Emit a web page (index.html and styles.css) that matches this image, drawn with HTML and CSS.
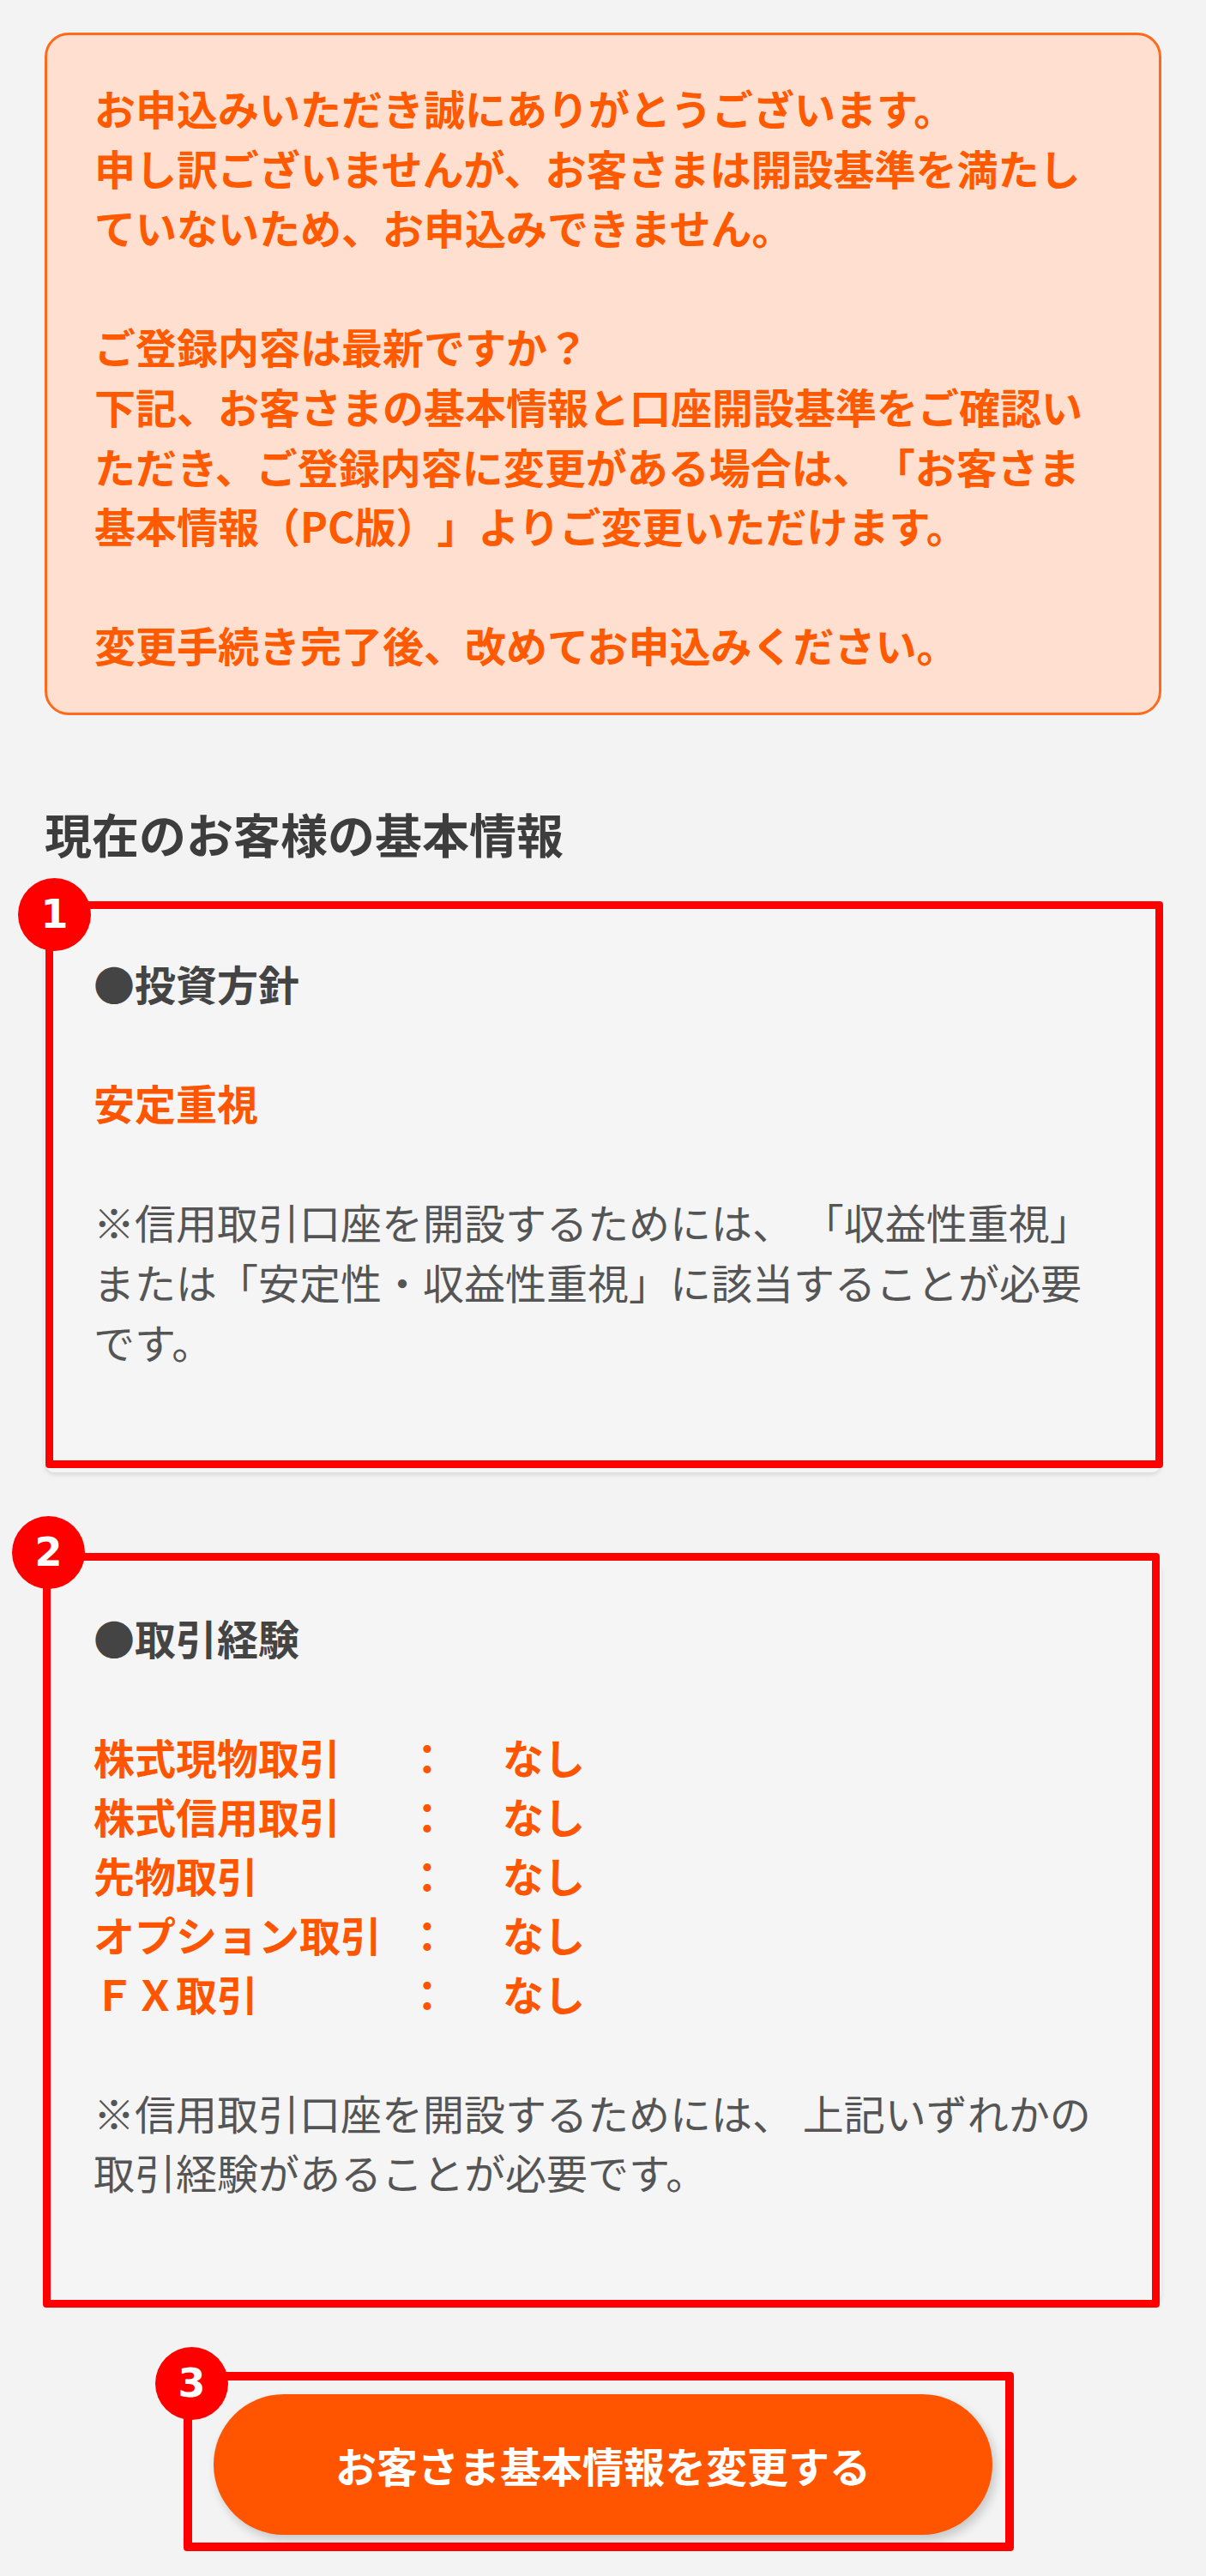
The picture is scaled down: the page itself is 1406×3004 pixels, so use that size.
FILE: index.html
```html
<!DOCTYPE html>
<html lang="ja">
<head>
<meta charset="utf-8">
<title>口座開設基準のご案内</title>
<link rel="stylesheet" href="styles.css">
</head>
<body>
<main class="page">
  <section class="notice">
    <p>お申込みいただき誠にありがとうございます。<br>申し訳ございませんが、お客さまは開設基準を満たし<br>ていないため、お申込みできません。</p>
    <p>ご登録内容は最新ですか？<br>下記、お客さまの基本情報と口座開設基準をご確認い<br>ただき、ご登録内容に変更がある場合は、「お客さま<br>基本情報（PC版）」よりご変更いただけます。</p>
    <p>変更手続き完了後、改めてお申込みください。</p>
  </section>

  <h2 class="section-title">現在のお客様の基本情報</h2>

  <div class="card-wrap">
    <div class="card">
      <p class="card-label">●投資方針</p>
      <p class="card-value">安定重視</p>
      <p class="card-note">※信用取引口座を開設するためには、 「収益性重視」<br>または「安定性・収益性重視」に該当することが必要<br>です。</p>
    </div>
    <span class="frame frame--1"></span>
    <span class="badge badge--1">1</span>
  </div>

  <div class="card-wrap card-wrap--2">
    <div class="card">
      <p class="card-label">●取引経験</p>
      <div class="rows">
        <span>株式現物取引</span><span class="colon">：</span><span class="val">なし</span>
        <span>株式信用取引</span><span class="colon">：</span><span class="val">なし</span>
        <span>先物取引</span><span class="colon">：</span><span class="val">なし</span>
        <span>オプション取引</span><span class="colon">：</span><span class="val">なし</span>
        <span>ＦＸ取引</span><span class="colon">：</span><span class="val">なし</span>
      </div>
      <p class="card-note">※信用取引口座を開設するためには、 上記いずれかの<br>取引経験があることが必要です。</p>
    </div>
    <span class="frame frame--2"></span>
    <span class="badge badge--2">2</span>
  </div>

  <div class="action">
    <div class="btn-wrap">
      <button class="btn" type="button">お客さま基本情報を変更する</button>
      <span class="frame frame--3"></span>
      <span class="badge badge--3">3</span>
    </div>
  </div>
</main>
</body>
</html>
```

FILE: styles.css
```css
* {
  box-sizing: border-box;
}

html, body {
  margin: 0;
  padding: 0;
}

body {
  background: #f3f3f3;
  font-family: "Noto Sans CJK JP", "Noto Sans", sans-serif;
  text-spacing-trim: space-all;
}

.page {
  padding: 38px 52px 40px;
}

/* notice box */
.notice {
  background: #ffdfcf;
  border: 3px solid #ff6a1a;
  border-radius: 28px;
  padding: 50px 55px 44px;
  color: #ff5a00;
  font-weight: 700;
  font-size: 48px;
  line-height: 69.6px;
  display: flex;
  flex-direction: column;
  gap: 69.6px;
}

.notice p {
  margin: 0;
  white-space: nowrap;
}

/* section title */
.section-title {
  margin: 97px 0 45px;
  font-size: 55px;
  line-height: 80px;
  font-weight: 700;
  color: #3d3d3d;
}

/* cards */
.card-wrap {
  position: relative;
}

.card-wrap--2 {
  margin-top: 102px;
}

.card {
  background: #f5f5f5;
  border-radius: 12px;
  box-shadow: 0 3px 5px rgba(0, 0, 0, 0.1);
  padding: 56px 56px 118px 57px;
  font-size: 48px;
  line-height: 69.6px;
  display: flex;
  flex-direction: column;
  gap: 69.6px;
}

.card p {
  margin: 0;
  white-space: nowrap;
}

.card-label {
  color: #444;
  font-weight: 700;
}

.card-value {
  color: #ff5500;
  font-weight: 700;
}

.card-note {
  color: #555;
  font-weight: 400;
}

.rows {
  display: grid;
  grid-template-columns: 365px 48px auto;
  line-height: 69px;
  color: #ff5500;
  font-weight: 700;
}

.rows .val {
  margin-left: 64px;
}

/* annotation overlays */
.frame {
  position: absolute;
  border: 9px solid #ff0000;
  border-radius: 4px;
  pointer-events: none;
}

.frame--1 {
  top: -5px;
  left: 1px;
  right: -2px;
  bottom: 5px;
}

.frame--2 {
  top: -8px;
  left: -2px;
  right: 2px;
  bottom: -5px;
}

.frame--3 {
  top: -26px;
  left: -35px;
  right: -25px;
  bottom: -19px;
  border-width: 10px;
}

.badge {
  position: absolute;
  width: 85px;
  height: 85px;
  border-radius: 50%;
  background: #ff0000;
  color: #fff;
  font-family: "DejaVu Sans", sans-serif;
  font-weight: 700;
  font-size: 46px;
  line-height: 85px;
  text-align: center;
}

.badge--1 {
  left: -31px;
  top: -32px;
}

.badge--2 {
  left: -38px;
  top: -51px;
}

.badge--3 {
  left: -68px;
  top: -55px;
}

/* action button */
.action {
  margin-top: 106px;
}

.btn-wrap {
  position: relative;
  width: 908px;
  margin: 0 auto;
}

.btn {
  display: block;
  width: 100%;
  height: 164px;
  border: 0;
  border-radius: 82px;
  background: #ff5500;
  color: #fff;
  font-family: "Noto Sans CJK JP", "Noto Sans", sans-serif;
  font-weight: 700;
  font-size: 48px;
  line-height: 1;
  box-shadow: 4px 6px 12px rgba(0, 0, 0, 0.18);
  cursor: pointer;
}
```
